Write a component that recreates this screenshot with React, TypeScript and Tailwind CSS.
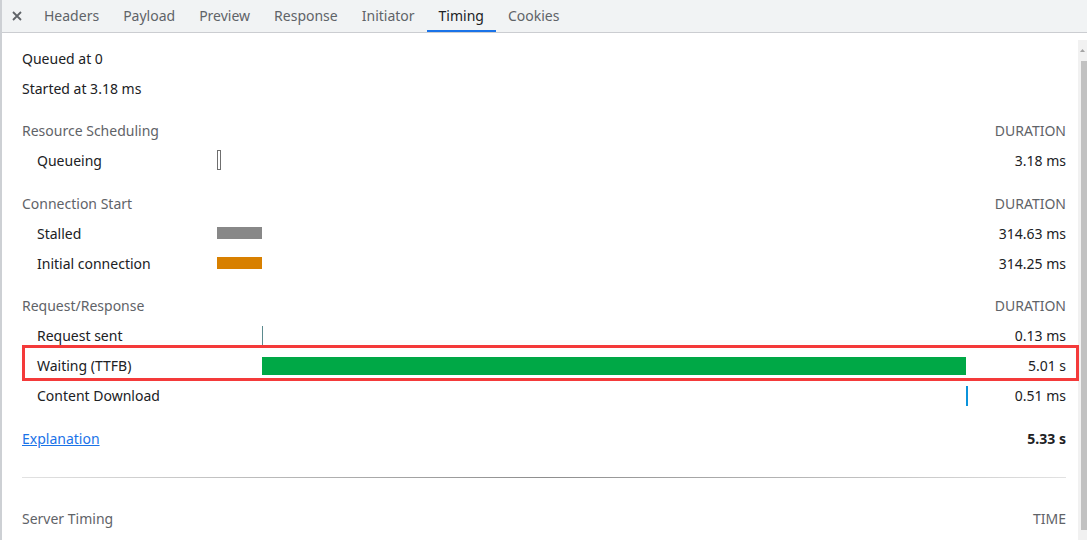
import React from "react";

const font = { fontFamily: '"Noto Sans", "Open Sans", sans-serif' };

function Tab({ label, active }: { label: string; active?: boolean }) {
  return (
    <div
      className={
        "relative flex h-full items-center px-[12px] pb-[2px] " +
        (active ? "text-[#202124]" : "text-[#5f6368]")
      }
    >
      {label}
      {active && <div className="absolute bottom-0 left-0 right-0 h-[2px] bg-[#1a73e8]" />}
    </div>
  );
}

function Header({ title, right, className }: { title: string; right: string; className?: string }) {
  return (
    <div className={"flex h-[30px] items-center text-[#5f6368] " + (className ?? "")}>
      <div className="relative top-[-1px] flex-1">{title}</div>
      <div className="relative top-[-1px]">{right}</div>
    </div>
  );
}

function Row({
  label,
  value,
  bar,
  highlight,
}: {
  label: string;
  value: string;
  bar?: React.ReactNode;
  highlight?: boolean;
}) {
  return (
    <div className="relative flex h-[30px] items-center pl-[15px] text-[#202124]">
      <div className="relative top-[-1px] w-[180px] shrink-0">{label}</div>
      <div className="relative h-full w-[750px] shrink-0">{bar}</div>
      <div className="relative top-[-1px] flex-1 text-right">{value}</div>
      {highlight && (
        <div className="pointer-events-none absolute bottom-0 left-0 right-[-13px] top-[-6px] border-[3px] border-[#f43a3a]" />
      )}
    </div>
  );
}

export default function App() {
  return (
    <div
      className="relative flex h-[540px] w-[1087px] flex-col overflow-hidden border-l-2 border-[#cdd0d4] bg-white text-[14px]"
      style={font}
    >
      <div className="flex h-[33px] shrink-0 items-stretch border-b border-[#cbcdd1] bg-[#f1f3f4]">
        <div className="flex w-[30px] items-center justify-center pb-[1px] text-[#5f6368]">
          <svg width="10" height="10" viewBox="0 0 10 10">
            <path d="M1 1L9 9M9 1L1 9" stroke="#5f6368" strokeWidth="1.8" />
          </svg>
        </div>
        <Tab label="Headers" />
        <Tab label="Payload" />
        <Tab label="Preview" />
        <Tab label="Response" />
        <Tab label="Initiator" />
        <Tab label="Timing" active />
        <Tab label="Cookies" />
      </div>
      <div className="flex min-h-0 flex-1">
        <div className="flex-1 pl-[20px] pr-[12px] pt-[11px]">
          <div className="flex h-[30px] items-center text-[#202124]">
            <span className="relative top-[-1px]">Queued at 0</span>
          </div>
          <div className="flex h-[30px] items-center text-[#202124]">
            <span className="relative top-[-1px]">Started at 3.18 ms</span>
          </div>

          <Header title="Resource Scheduling" right="DURATION" className="mt-[12px]" />
          <Row
            label="Queueing"
            value="3.18 ms"
            bar={<div className="absolute left-0 top-[4px] h-[20px] w-[4px] border border-[#6f6f6f] bg-white" />}
          />

          <Header title="Connection Start" right="DURATION" className="mt-[13px]" />
          <Row
            label="Stalled"
            value="314.63 ms"
            bar={<div className="absolute left-0 top-[8px] h-[12px] w-[45px] bg-[#888888]" />}
          />
          <Row
            label="Initial connection"
            value="314.25 ms"
            bar={<div className="absolute left-0 top-[8px] h-[12px] w-[45px] bg-[#d88000]" />}
          />

          <Header title="Request/Response" right="DURATION" className="mt-[12px]" />
          <Row
            label="Request sent"
            value="0.13 ms"
            bar={<div className="absolute left-[45px] top-[5px] h-[20px] w-[1px] bg-[#5b8a8e]" />}
          />
          <Row
            label="Waiting (TTFB)"
            value="5.01 s"
            highlight
            bar={<div className="absolute left-[45px] top-[6px] h-[18px] w-[704px] bg-[#00a846]" />}
          />
          <Row
            label="Content Download"
            value="0.51 ms"
            bar={<div className="absolute left-[749px] top-[5px] h-[20px] w-[2px] bg-[#0b93db]" />}
          />

          <div className="mt-[13px] flex h-[30px] items-center">
            <a href="#" className="relative top-[-1px] flex-1 text-[#1a73e8] underline">
              Explanation
            </a>
            <div className="relative top-[-1px] font-bold text-[#202124]">5.33 s</div>
          </div>

          <div className="mt-[23px] h-[1px] bg-gradient-to-r from-[#e2e2e2] via-[#8e8e8e] to-[#e2e2e2]" />

          <Header title="Server Timing" right="TIME" className="mt-[26px]" />
        </div>
        <div className="mt-[7px] flex w-[9px] shrink-0 flex-col bg-[#f1f1f1]">
          <div className="flex h-[21px] items-center justify-center">
            <svg width="5" height="3" viewBox="0 0 5 3">
              <path d="M0 3L2.5 0L5 3Z" fill="#a3a3a3" />
            </svg>
          </div>
          <div className="ml-[3px] h-[469px] bg-[#c1c1c1]" />
        </div>
      </div>
    </div>
  );
}
